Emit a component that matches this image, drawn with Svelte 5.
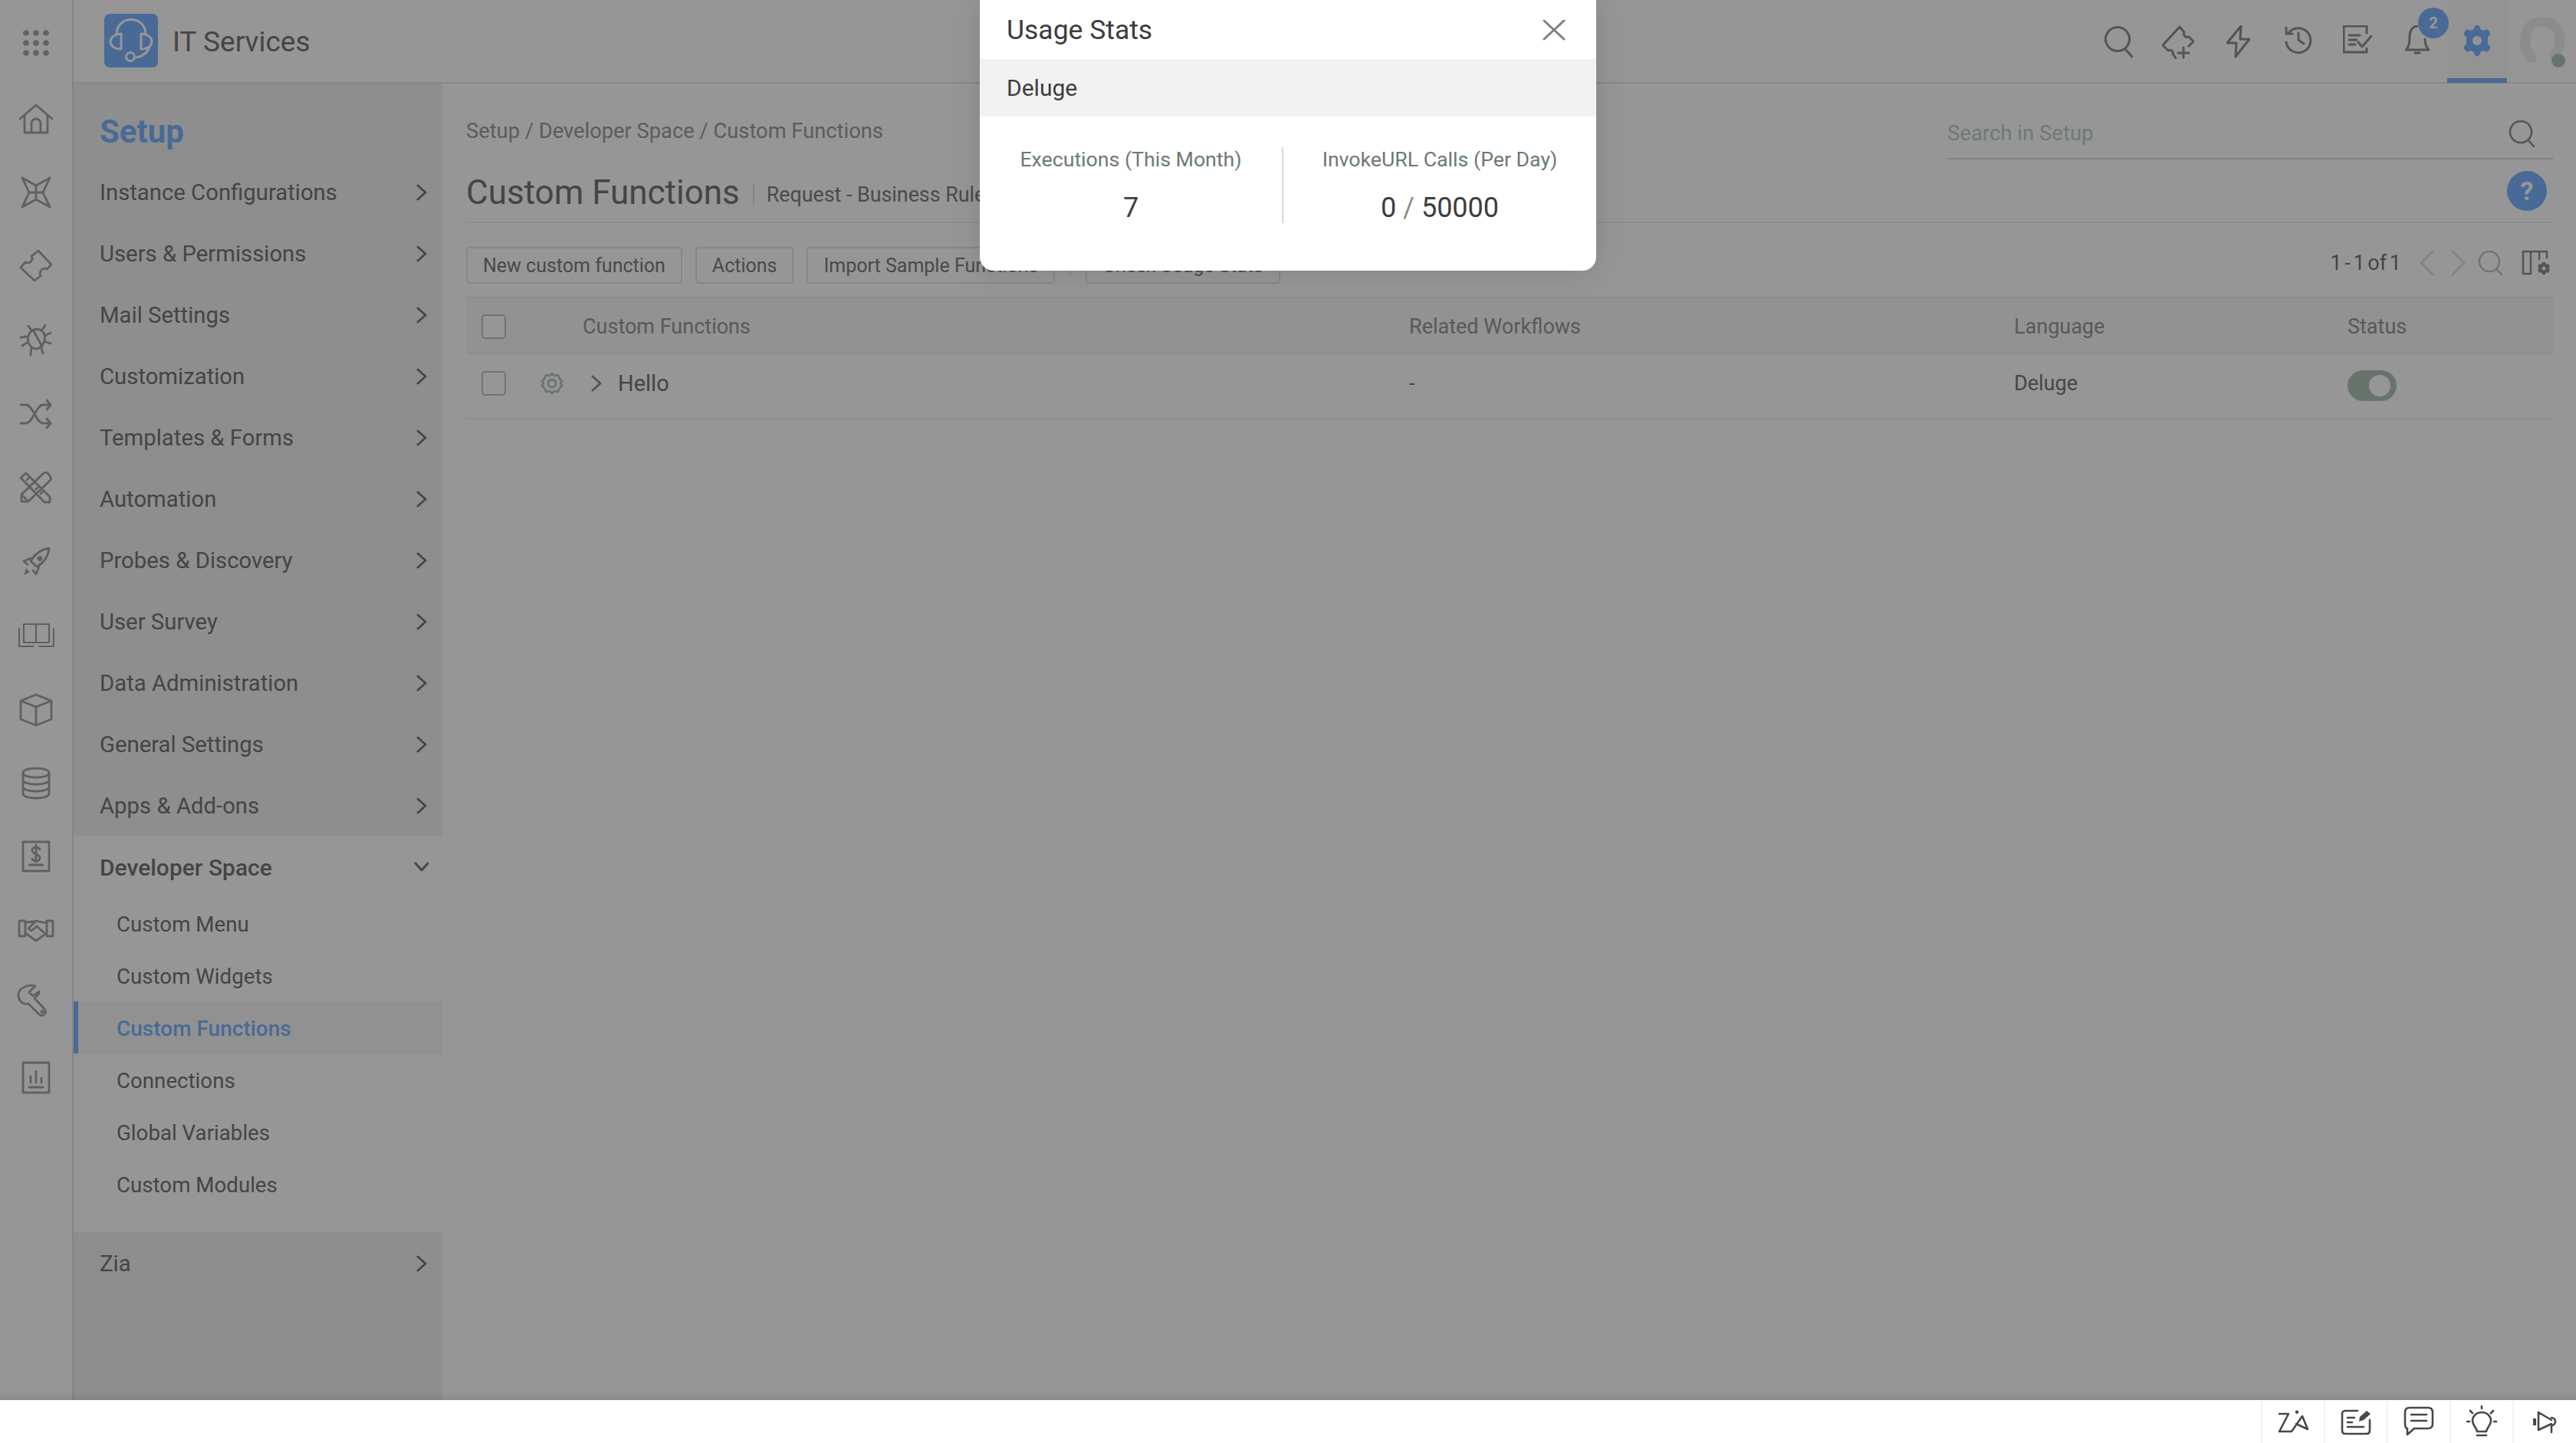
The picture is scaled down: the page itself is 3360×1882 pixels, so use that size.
<script>
	const railIcons = [
		{ d: "M3 24 24 6 45 24M9 20V42H39V20M18 42V30a6 6 0 0 1 12 0V42" },
		{ d: "M6 5 24 15 42 5 33 24 42 43 24 33 6 43 15 24ZM24 15V33M15 24H33" },
		{ d: "M27 4 44 22 38 28C33 25 27 31 30 37L22 43 4 26 10 19C16 22 21 16 18 11Z" },
		{ d: "M16 14C20 8 30 8 34 14 38 22 33 34 24 35 15 34 10 23 16 14ZM20 10 32 32M14 5 18 11M36 4 32 10M37 17 43 14M37 26 43 28M31 34 33 41M18 33 17 43M12 27 6 31M11 19 4 20" },
		{ d: "M4 12H11C20 12 24 36 33 36H43M4 36H11C20 36 24 12 33 12H43M38 6 43 12 38 18M38 30 43 36 38 42" },
		{ d: "M4 11 11 5 42 36 42 43 35 43ZM12 14 16 10M18 20 22 16M24 26 28 22M30 32 34 28M33 6C35 4 38 4 40 6L42 9C44 11 44 13 42 15L14 42H5V33ZM5 33 14 42" },
		{ d: "M41 7C30 9 22 15 17 24L25 31C34 26 40 18 41 7ZM17 20 8 24 13 28M29 28 24 41 20 36", solid: "M8 42 11 33 16 38ZM29 17a3.500 3.500 0 1 0 .01 0Z" },
		{ d: "M8 10H41V34H8ZM24 10V34M2 16V39H21M47 16V39H28", thin: true },
		{ d: "M24 5 44 13V37L24 45 4 37V13ZM4 13 24 21 44 13M24 21V45" },
		{ d: "M7 11C7 3 41 3 41 11 41 19 7 19 7 11ZM7 11V38C7 46 41 46 41 38V11M7 20C7 28 41 28 41 20M7 29C7 37 41 37 41 29" },
		{ d: "M7 5H41V43H7ZM15 35H33M29 15C27 11 19 11 19 16 19 22 29 20 29 26 29 31 21 31 19 27M24 9V31" },
		{ d: "M2 12H10V32H2ZM46 12H38V32H46ZM10 14 20 13 24 12 38 15V28L24 38 10 28M24 12 14 22 18 25 25 19 34 27" },
		{ d: "M28 5C18 2 5 8 6 18 7 25 12 30 19 28L33 42C38 46 44 40 40 35L27 21C31 18 33 15 33 12L25 18 20 13ZM37 37.500a1 1 0 1 0 .01 0Z", offset: true },
		{ d: "M7 4H41V43H7ZM15 36H33M17 30V22M24 30V15M31 30V24", thick: true }
	];

	const navTop = [
		"Instance Configurations", "Users & Permissions", "Mail Settings", "Customization",
		"Templates & Forms", "Automation", "Probes & Discovery", "User Survey",
		"Data Administration", "General Settings", "Apps & Add-ons"
	];
	const devItems = ["Custom Menu", "Custom Widgets", "Custom Functions", "Connections", "Global Variables", "Custom Modules"];
	const buttons = ["New custom function", "Actions", "Import Sample Functions"];
	const gridDots = [11, 24, 37];

	// w is the drawn width of the icon, so each one sits centred in its 78px cell
	const topIcons = [
		{ w: 37, d: "M17 2.500a15.500 15.500 0 1 0 .01 0ZM27 31 36 41" },
		{ w: 42, d: "M1 26 23 2 29 9C27 12 31 17 35 15L41 21 35 27M1 26 8 33C11 31 15 33 14 37L18 43M28 29V42M21 36H35" },
		{ w: 31, d: "M19 1 1 23H13L12 41 30 18H18Z" },
		{ w: 38, d: "M8 9A16 16 0 1 1 4 22M4 3V11H12M20 10V19L27 24" },
		{ w: 38, d: "M31 10V1H1V35H31V30M8 13H22M8 19H18M8 25H16M20 22 25 28 37 14" },
		{ w: 32, d: "M1 32C5 28 6 24 6 14 6 6 11 1 16 1M26 18C26 24 27 28 31 32M1 32H31M13 36H19" }
	];

	const footIcons = [
		{ d: "M2 11H14L2 34H18L32 14 39 31 24 24", solid: "M25 6.500a2.200 2.200 0 1 0 .01 0Z" },
		{ d: "M22 7H6C3 7 2 9 2 11V32C2 35 3 37 6 37H34C37 37 38 35 38 32V19M9 16H18M9 22H15M9 28H30", solid: "M24 21 25 15 34 7 39 11 30 19Z" },
		{ d: "M8 3H32C36 3 38 5 38 9V24C38 28 36 30 32 30H14L5 38V30C3 30 2 28 2 24V9C2 5 4 3 8 3ZM10 12H30M10 20H30" },
		{ d: "M20 9C12 9 8 15 8 20 8 26 13 28 14 34H26C27 28 32 26 32 20 32 15 28 9 20 9ZM14 39H26M20 1V4M5 7 8 10M35 7 32 10M1 21H4M36 21H39" },
		{ d: "M11 9V32L28 24M11 9 28 19M28 16a5 5 0 1 1 0 10M28 26V35", solid: "M4 17H8V26H4Z" }
	];
</script>

<div class="page">
	<div class="main">
		<aside class="rail">
			<div class="apps">
				<svg width="48" height="48" viewBox="0 0 48 48">
					{#each gridDots as cy}
						{#each gridDots as cx}
							<circle {cx} {cy} r="3.800" />
						{/each}
					{/each}
				</svg>
			</div>
			{#each railIcons as icon}
				<div class="rail-item" class:thin={icon.thin}>
					<svg width="48" height="48" viewBox="0 0 48 48" class:shift={icon.offset}>
						<path d={icon.d} />
						{#if icon.solid}<path class="solid" d={icon.solid} />{/if}
					</svg>
				</div>
			{/each}
		</aside>

		<div class="right">
			<header class="topbar">
				<div class="brand">
					<svg class="logo" width="70" height="70" viewBox="0 0 70 70">
						<rect width="70" height="70" rx="7" fill="#7db5ff" />
						<g fill="none" stroke="#fff" stroke-width="3">
							<path d="M16 27C16 1 54 1 54 27" />
							<path d="M22 26V46C12 46 8 41 8 36 8 31 14 26 22 26Z" />
							<path d="M48 26V46C58 46 62 41 62 36 62 31 56 26 48 26Z" />
							<path d="M59 43C56 52 48 56 41 57" />
							<circle cx="34" cy="56" r="5.500" />
						</g>
					</svg>
					<span class="brand-name">IT Services</span>
				</div>
				<div class="top-icons">
					{#each topIcons as icon, i}
						<span class="top-icon">
							<svg width={icon.w} height="44" viewBox="0 0 {icon.w} 44"><path d={icon.d} /></svg>
							{#if i === 5}
								<span class="badge">2</span>
							{/if}
						</span>
					{/each}
					<span class="settings-tab">
						<svg width="40" height="42" viewBox="0 0 40 42">
							<path class="solid" fill-rule="evenodd" d="M20 1C23 1 24 3 24 6L29 8C31 6 34 6 36 9 38 12 37 15 34 16V26C37 27 38 30 36 33 34 36 31 36 29 34L24 36C24 39 23 41 20 41 17 41 16 39 16 36L11 34C9 36 6 36 4 33 2 30 3 27 6 26V16C3 15 2 12 4 9 6 6 9 6 11 8L16 6C16 3 17 1 20 1ZM20 15A6 6 0 1 0 20.010 15Z" />
						</svg>
					</span>
					<span class="avatar">
						<svg width="64" height="60" viewBox="0 0 64 60">
							<path class="ring" d="M18 54C4 38 6 7 32 6 58 7 60 36 48 50" />
						</svg>
						<span class="online"></span>
					</span>
				</div>
			</header>

			<div class="body">
				<nav class="sidebar">
					<h2 class="setup">Setup</h2>
					{#each navTop as item}
						<div class="nav-item">
							<span>{item}</span>
							<svg class="chev" width="14" height="22" viewBox="0 0 14 22"><path d="M2 2 12 11 2 20" /></svg>
						</div>
					{/each}
					<div class="dev">
						<div class="nav-item open">
							<span>Developer Space</span>
							<svg class="chev down" width="20" height="14" viewBox="0 0 20 14"><path d="M2 2 10 11 18 2" /></svg>
						</div>
						{#each devItems as sub}
							<div class="sub-item" class:active={sub === "Custom Functions"}>{sub}</div>
						{/each}
					</div>
					<div class="nav-item">
						<span>Zia</span>
						<svg class="chev" width="14" height="22" viewBox="0 0 14 22"><path d="M2 2 12 11 2 20" /></svg>
					</div>
				</nav>

				<section class="content">
					<div class="crumb-row">
						<div class="crumbs">Setup / Developer Space / Custom Functions</div>
						<div class="setup-search">
							<span>Search in Setup</span>
							<svg width="36" height="36" viewBox="0 0 36 36"><path d="M16 2a14 14 0 1 0 .01 0ZM26 27 33 35" /></svg>
						</div>
					</div>

					<div class="title-row">
						<h1>Custom Functions</h1>
						<span class="title-sep"></span>
						<span class="module">Request - Business Rules</span>
						<span class="help">?</span>
					</div>

					<div class="toolbar">
						{#each buttons as label}
							<button>{label}</button>
						{/each}
						<span class="tool-sep"></span>
						<button>Check Usage Stats</button>
						<div class="pager">
							<span class="pager-text">1 - 1 of 1</span>
							<svg class="faint" width="20" height="34" viewBox="0 0 20 34"><path d="M18 2 3 17 18 32" /></svg>
							<svg class="faint next" width="20" height="34" viewBox="0 0 20 34"><path d="M2 2 17 17 2 32" /></svg>
							<svg class="tint" width="34" height="34" viewBox="0 0 34 34"><path d="M15 2a13 13 0 1 0 .01 0ZM24 25 31 32" /></svg>
							<svg class="columns" width="38" height="34" viewBox="0 0 38 34">
								<path d="M2 2H12V31H2ZM12 2H33V10M23 2V12" />
								<path class="cog" fill-rule="evenodd" d="M27 16H31L32 19 35 18 37 22 35 24 37 26 35 30 32 29 31 32H27L26 29 23 30 21 26 23 24 21 22 23 18 26 19ZM29 21.500a2.500 2.500 0 1 0 .01 0Z" />
							</svg>
						</div>
					</div>

					<div class="table-row head">
						<div class="cell"><span class="check"></span></div>
						<div class="cell">Custom Functions</div>
						<div class="cell">Related Workflows</div>
						<div class="cell">Language</div>
						<div class="cell">Status</div>
					</div>
					<div class="table-row data">
						<div class="cell">
							<span class="check"></span>
							<svg class="row-gear" width="30" height="30" viewBox="0 0 30 30"><path d="M15 2 18 5 23 4 25 9 28 12 26 15 28 18 25 21 23 26 18 25 15 28 12 25 7 26 5 21 2 18 4 15 2 12 5 9 7 4 12 5ZM15 10a5 5 0 1 0 .01 0Z" /></svg>
						</div>
						<div class="cell">
							<svg class="row-chev" width="16" height="24" viewBox="0 0 16 24"><path d="M3 3 13 12 3 21" /></svg>
							<span class="hello">Hello</span>
						</div>
						<div class="cell">-</div>
						<div class="cell">Deluge</div>
						<div class="cell"><span class="toggle"><span class="knob"></span></span></div>
					</div>
				</section>
			</div>
		</div>

		<div class="backdrop"></div>

		<div class="modal">
			<div class="modal-head">
				<span>Usage Stats</span>
				<svg width="30" height="28" viewBox="0 0 30 28"><path d="M2 2 28 26M28 2 2 26" /></svg>
			</div>
			<div class="modal-band">Deluge</div>
			<div class="stats">
				<div class="stat">
					<div class="stat-label">Executions (This Month)</div>
					<div class="stat-value">7</div>
				</div>
				<div class="stat">
					<div class="stat-label">InvokeURL Calls (Per Day)</div>
					<div class="stat-value">0 <i>/</i> 50000</div>
				</div>
			</div>
		</div>
	</div>

	<footer class="footer">
		{#each footIcons as icon}
			<span class="foot-btn">
				<svg width="40" height="42" viewBox="0 0 40 42">
					<path d={icon.d} />
					{#if icon.solid}<path class="solid" d={icon.solid} />{/if}
				</svg>
			</span>
		{/each}
	</footer>
</div>

<style>
	:global(body) {
		margin: 0;
		background: #fff;
		font-family: Roboto, "Liberation Sans", sans-serif;
	}

	svg {
		display: block;
		flex-shrink: 0;
	}

	svg path {
		fill: none;
		stroke-linecap: round;
		stroke-linejoin: round;
	}

	.page {
		width: 3360px;
		height: 1882px;
		display: flex;
		flex-direction: column;
		overflow: hidden;
	}

	.main {
		position: relative;
		height: 1826px;
		display: flex;
		background: #fff;
		overflow: hidden;
	}

	.backdrop {
		position: absolute;
		inset: 0;
		background: rgba(0, 0, 0, 0.41);
		box-shadow: inset 0 -12px 12px -10px rgba(0, 0, 0, 0.12);
	}

	/* left icon rail */
	.rail {
		width: 96px;
		flex-shrink: 0;
		box-sizing: border-box;
		border-right: 2px solid #e2e2e2;
		display: flex;
		flex-direction: column;
		align-items: center;
	}

	.apps {
		height: 102px;
		padding-top: 5px;
		display: flex;
		align-items: center;
	}

	.apps circle {
		fill: #a8a8a8;
	}

	.rail-item {
		height: 96.200px;
		flex-shrink: 0;
		display: flex;
		align-items: center;
	}

	.rail-item path {
		stroke: #a4a4a4;
		stroke-width: 2.800;
	}

	.rail-item.thin path {
		stroke-width: 2.200;
	}

	.rail-item path.solid {
		fill: #a4a4a4;
		stroke: none;
	}

	.shift {
		transform: translate(-5px, -4px);
	}

	/* top bar */
	.right {
		flex: 1;
		min-width: 0;
		display: flex;
		flex-direction: column;
	}

	.topbar {
		height: 109px;
		flex-shrink: 0;
		box-sizing: border-box;
		border-bottom: 2px solid #e6e6e6;
		display: flex;
		justify-content: space-between;
		align-items: flex-start;
	}

	.brand {
		display: flex;
		align-items: center;
		gap: 19px;
		padding: 18px 0 0 40px;
	}

	.brand-name {
		margin-top: 2px;
		font-size: 37px;
		color: #757575;
	}

	.top-icons {
		display: flex;
		align-items: flex-start;
		height: 107px;
		padding-right: 12px;
	}

	.top-icon {
		position: relative;
		box-sizing: border-box;
		width: 78px;
		height: 107px;
		padding-top: 3px;
		display: flex;
		align-items: center;
		justify-content: center;
	}

	.top-icon path {
		stroke: #909090;
		stroke-width: 3;
	}

	.badge {
		position: absolute;
		left: 40px;
		top: 10px;
		width: 40px;
		height: 40px;
		border-radius: 50%;
		background: #7db5ff;
		color: #fff;
		font-size: 20px;
		font-weight: 700;
		display: flex;
		align-items: center;
		justify-content: center;
	}

	.settings-tab {
		box-sizing: border-box;
		width: 78px;
		height: 108px;
		background: #fafafa;
		border-bottom: 6px solid #7db5ff;
		display: flex;
		justify-content: center;
		padding-top: 32px;
	}

	.settings-tab .solid {
		fill: #7db5ff;
		stroke: none;
	}

	.avatar {
		position: relative;
		display: block;
		margin: 22px 0 0 14px;
	}

	.avatar .ring {
		stroke: #efefef;
		stroke-width: 13;
	}

	.online {
		position: absolute;
		left: 44px;
		top: 48px;
		width: 18px;
		height: 18px;
		border-radius: 50%;
		background: #b0c6b7;
	}

	/* setup sidebar */
	.body {
		flex: 1;
		min-height: 0;
		display: flex;
	}

	.sidebar {
		width: 481px;
		flex-shrink: 0;
		background: #f2f2f2;
		color: #757575;
	}

	.setup {
		margin: 0;
		padding: 39px 0 14px 34px;
		line-height: 48px;
		font-size: 42px;
		font-weight: 700;
		color: #7db5ff;
	}

	.nav-item {
		height: 80px;
		box-sizing: border-box;
		padding: 2px 20px 0 34px;
		font-size: 29.300px;
		display: flex;
		align-items: center;
		justify-content: space-between;
	}

	.nav-item.open {
		font-size: 30px;
		font-weight: 500;
		padding-right: 17px;
	}

	.chev path {
		stroke: #7a7a7a;
		stroke-width: 3;
	}

	.dev {
		background: #fff;
		padding-bottom: 29px;
	}

	.sub-item {
		height: 68px;
		box-sizing: border-box;
		padding: 2px 0 0 56px;
		font-size: 27.700px;
		display: flex;
		align-items: center;
	}

	.sub-item.active {
		border-left: 6px solid #7db5ff;
		padding-left: 50px;
		background: #f7f7f7;
		color: #7db5ff;
		font-size: 28px;
		font-weight: 500;
	}

	/* main content */
	.content {
		flex: 1;
		min-width: 0;
		padding: 0 30px 0 31px;
	}

	.crumb-row {
		height: 100px;
		box-sizing: border-box;
		padding-top: 44px;
		display: flex;
		justify-content: space-between;
		align-items: flex-start;
	}

	.crumbs {
		line-height: 36px;
		font-size: 27.300px;
		color: #9c9c9c;
	}

	.setup-search {
		width: 790px;
		height: 55px;
		box-sizing: border-box;
		border-bottom: 2px solid #dcdcdc;
		padding: 3px 22px 0 0;
		font-size: 27.500px;
		color: #bcd0c5;
		display: flex;
		align-items: flex-start;
		justify-content: space-between;
	}

	.setup-search span {
		line-height: 36px;
	}

	.setup-search path {
		stroke: #909090;
		stroke-width: 2.500;
	}

	.title-row {
		height: 82px;
		box-sizing: border-box;
		border-bottom: 2px solid #eee;
		display: flex;
		align-items: center;
	}

	h1 {
		margin: 3px 0 0;
		font-size: 44px;
		font-weight: 400;
		color: #757575;
	}

	.title-sep {
		width: 2px;
		height: 28px;
		margin: 10px 16px 0 17px;
		background: #e2e2e2;
	}

	.module {
		margin-top: 10px;
		font-size: 26.800px;
		color: #808080;
	}

	.help {
		width: 52px;
		height: 52px;
		margin-left: auto;
		margin-right: 8px;
		border-radius: 50%;
		background: #7db5ff;
		color: #fff;
		font-size: 34px;
		font-weight: 700;
		display: flex;
		align-items: center;
		justify-content: center;
	}

	.toolbar {
		height: 96px;
		box-sizing: border-box;
		padding-top: 31px;
		display: flex;
		align-items: flex-start;
		gap: 17px;
	}

	button {
		height: 48px;
		padding: 0 20px;
		border: 2px solid #e6e6e6;
		border-radius: 4px;
		background: #fff;
		color: #7d7d7d;
		font-family: inherit;
		font-size: 25px;
		white-space: nowrap;
	}

	.tool-sep {
		width: 2px;
		height: 24px;
		margin: 14px 2px 0;
		background: #e6e6e6;
	}

	.pager {
		margin-left: auto;
		margin-top: 4px;
		display: flex;
		align-items: center;
		padding-right: 3px;
	}

	.pager-text {
		font-size: 27px;
		word-spacing: -3px;
		color: #757575;
		margin-right: 23px;
	}

	.faint path {
		stroke: #e0e0e0;
		stroke-width: 3;
	}

	.next {
		margin-left: 22px;
	}

	.tint {
		margin-left: 15px;
	}

	.tint path {
		stroke: #b8ccc0;
		stroke-width: 2.500;
	}

	.columns {
		margin-left: 23px;
	}

	.columns path {
		stroke: #909090;
		stroke-width: 2.500;
	}

	.columns path.cog {
		fill: #909090;
		stroke: none;
	}

	.table-row {
		display: grid;
		grid-template-columns: 152px 1078px 789px 435px 1fr;
		box-sizing: border-box;
		font-size: 27px;
	}

	.table-row.head {
		height: 75px;
		padding-top: 3px;
		background: #f9f9f9;
		border-top: 2px solid #ececec;
		border-bottom: 2px solid #ececec;
		color: #979797;
	}

	.table-row.data {
		height: 85px;
		padding-bottom: 8px;
		border-bottom: 2px solid #f2f2f2;
		color: #7a7a7a;
	}

	.cell {
		display: flex;
		align-items: center;
		min-width: 0;
	}

	.check {
		width: 32px;
		height: 32px;
		box-sizing: border-box;
		margin-left: 20px;
		border: 2px solid #bcc8c1;
		border-radius: 5px;
		background: #fff;
	}

	.row-gear {
		margin-left: 45px;
	}

	.row-gear path {
		stroke: #b0c6b7;
		stroke-width: 2.500;
	}

	.row-chev {
		margin-left: 10px;
	}

	.row-chev path {
		stroke: #909090;
		stroke-width: 3;
	}

	.hello {
		margin-left: 20px;
		font-size: 29px;
		color: #757575;
	}

	.toggle {
		width: 64px;
		height: 40px;
		margin-top: 6px;
		border-radius: 20px;
		background: #b0c6b7;
		display: flex;
		align-items: center;
		justify-content: flex-end;
		padding-right: 8px;
		box-sizing: border-box;
	}

	.knob {
		width: 28px;
		height: 28px;
		border-radius: 50%;
		background: #fff;
	}

	/* usage stats dialog */
	.modal {
		position: absolute;
		left: 1278px;
		top: 0;
		width: 804px;
		height: 353px;
		background: #fff;
		border-radius: 0 0 18px 18px;
		box-shadow: 0 0 40px rgba(0, 0, 0, 0.12);
		overflow: hidden;
	}

	.modal-head {
		height: 77px;
		box-sizing: border-box;
		padding: 0 40px 0 35px;
		font-size: 35.500px;
		color: #3d3d3d;
		display: flex;
		align-items: center;
		justify-content: space-between;
	}

	.modal-head path {
		stroke: #808080;
		stroke-width: 3;
	}

	.modal-band {
		height: 75px;
		padding-left: 35px;
		background: #f2f2f2;
		font-size: 30px;
		color: #3d3d3d;
		display: flex;
		align-items: center;
	}

	.stats {
		display: grid;
		grid-template-columns: 394px 1fr;
		padding-top: 40px;
	}

	.stat {
		height: 99px;
		text-align: center;
	}

	.stat + .stat {
		border-left: 2px solid #d8d8d8;
	}

	.stat-label {
		line-height: 32px;
		font-size: 26.700px;
		color: #6c7a72;
	}

	.stat-value {
		margin-top: 25px;
		line-height: 44px;
		font-size: 36px;
		color: #3d3d3d;
	}

	.stat-value i {
		font-style: normal;
		color: #8a8a8a;
	}

	/* bottom bar */
	.footer {
		height: 56px;
		display: flex;
		justify-content: flex-end;
		background: #fff;
	}

	.foot-btn {
		box-sizing: border-box;
		width: 82px;
		border-left: 2px solid #f2f2f2;
		display: flex;
		align-items: center;
		justify-content: center;
	}

	.foot-btn:last-child {
		width: 83px;
	}

	.foot-btn path {
		stroke: #484848;
		stroke-width: 2.600;
	}

	.foot-btn path.solid {
		fill: #484848;
		stroke: none;
	}
</style>
